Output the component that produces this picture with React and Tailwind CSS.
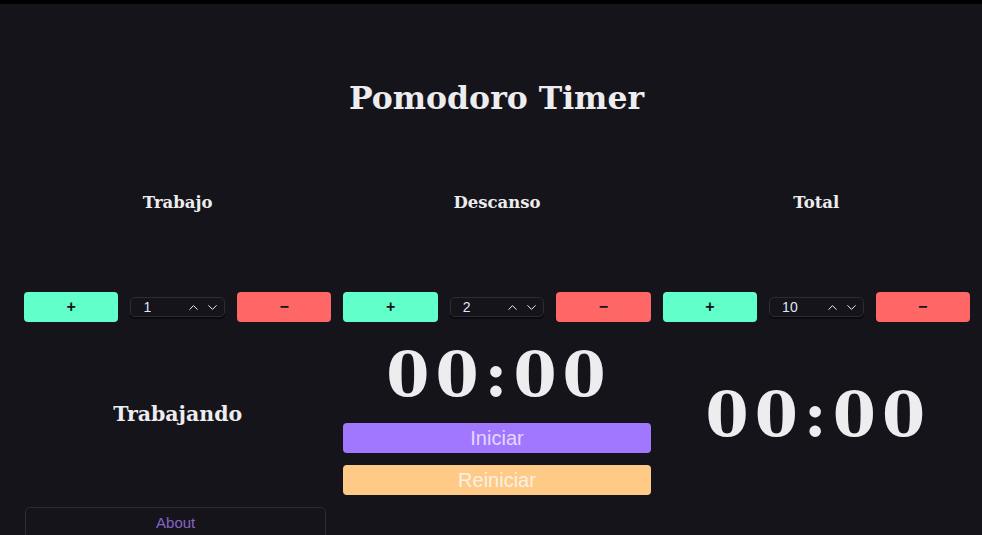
import React, { useState } from 'react';
import { ChevronUp, ChevronDown } from 'lucide-react';

const serif = { fontFamily: '"DejaVu Serif", Georgia, serif' };

function Stepper({ value }) {
  return (
    <div className="grid grid-cols-3 gap-3 items-center">
      <button className="h-[30px] rounded-[4px] bg-[#61ffca] text-[#15141b] text-base font-bold">+</button>
      <div className="h-5 rounded-[5px] border border-[#2d2c35] bg-[#15141b] shadow-[0_2px_0_#0b0a0f] flex items-center pl-3 pr-1 text-[14px] text-[#dfe6ff]">
        <span className="flex-1">{value}</span>
        <ChevronUp size={15} strokeWidth={1.6} className="text-[#f0f0f0] mr-1" />
        <ChevronDown size={15} strokeWidth={1.6} className="text-[#f0f0f0]" />
      </div>
      <button className="h-[30px] rounded-[4px] bg-[#ff6767] text-[#15141b] text-base font-bold">−</button>
    </div>
  );
}

export default function App() {
  const [values] = useState({ trabajo: 1, descanso: 2, total: 10 });

  return (
    <div className="min-h-screen bg-[#15141b] border-t-4 border-black text-[#edecee]" style={{ fontFamily: '"Liberation Sans", Arial, sans-serif' }}>
      <h1 className="mt-[74px] pl-[11px] text-center text-[31.5px] leading-[40px] font-bold" style={serif}>
        Pomodoro Timer
      </h1>

      <div className="pl-6 pr-3 grid grid-cols-3 gap-x-3">
        {['Trabajo', 'Descanso', 'Total'].map((t) => (
          <h3 key={t} className="mt-[73px] text-center text-[16.5px] leading-6 font-bold" style={serif}>
            {t}
          </h3>
        ))}

        <div className="mt-[77px]"><Stepper value={values.trabajo} /></div>
        <div className="mt-[77px]"><Stepper value={values.descanso} /></div>
        <div className="mt-[77px]"><Stepper value={values.total} /></div>

        <div className="mt-3 flex items-center justify-center">
          <h2 className="text-[20.5px] font-bold" style={serif}>Trabajando</h2>
        </div>
        <div className="mt-3 flex flex-col">
          <div className="h-[89px] pb-2 pl-1 flex items-center justify-center text-[62px] font-bold tracking-[6px]" style={serif}>
            00:00
          </div>
          <button className="h-[30px] rounded-[4px] bg-[#a277ff] text-[#e3d8ff] text-[20px]">Iniciar</button>
          <button className="mt-3 h-[30px] rounded-[4px] bg-[#ffca85] text-[#f8f1e8] text-[20px]">Reiniciar</button>
        </div>
        <div className="mt-3 pl-1 flex items-center justify-center">
          <div className="text-[62px] font-bold tracking-[6px]" style={serif}>00:00</div>
        </div>

        <div className="mt-3 pl-px pr-[5px]">
          <button className="w-full h-8 rounded-[5px] border border-[#2d2c35] text-[#8464c6] text-[15px]">About</button>
        </div>
      </div>
    </div>
  );
}
